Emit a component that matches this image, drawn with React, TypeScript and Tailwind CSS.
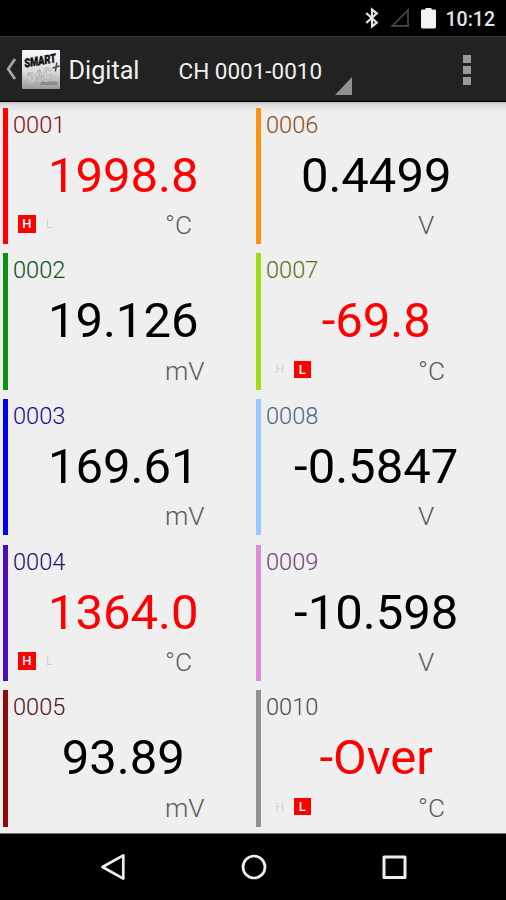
type Alarm = 'H' | 'L' | null;

interface Channel {
  id: string;
  value: string;
  unit: string;
  bar: string;
  label: string;
  alarm: Alarm;
}

const leftChannels: Channel[] = [
  { id: '0001', value: '1998.8', unit: '°C', bar: 'bg-[#ff0000]', label: 'text-[#7d1212]', alarm: 'H' },
  { id: '0002', value: '19.126', unit: 'mV', bar: 'bg-[#0a9014]', label: 'text-[#0d4f18]', alarm: null },
  { id: '0003', value: '169.61', unit: 'mV', bar: 'bg-[#0000f0]', label: 'text-[#12128a]', alarm: null },
  { id: '0004', value: '1364.0', unit: '°C', bar: 'bg-[#4b0cc0]', label: 'text-[#2b1068]', alarm: 'H' },
  { id: '0005', value: '93.89', unit: 'mV', bar: 'bg-[#900a0a]', label: 'text-[#4f1414]', alarm: null },
];

const rightChannels: Channel[] = [
  { id: '0006', value: '0.4499', unit: 'V', bar: 'bg-[#ff9010]', label: 'text-[#8a5018]', alarm: null },
  { id: '0007', value: '-69.8', unit: '°C', bar: 'bg-[#a0dc14]', label: 'text-[#56741a]', alarm: 'L' },
  { id: '0008', value: '-0.5847', unit: 'V', bar: 'bg-[#98c8fc]', label: 'text-[#4c6688]', alarm: null },
  { id: '0009', value: '-10.598', unit: 'V', bar: 'bg-[#dc8cdc]', label: 'text-[#704870]', alarm: null },
  { id: '0010', value: '-Over', unit: '°C', bar: 'bg-[#909090]', label: 'text-[#4c4c4c]', alarm: 'L' },
];

function AlarmFlag({ name, active }: { name: string; active: boolean }) {
  return (
    <span
      className={`flex h-[17.5px] w-[17.5px] items-center justify-center leading-none ${
        active ? 'bg-[#ff0000] text-[13px] font-medium text-white' : 'text-[12px] font-light text-[#c8c8c8]'
      }`}
    >
      {name}
    </span>
  );
}

function ChannelCell({ channel }: { channel: Channel }) {
  return (
    <div className="flex h-[136.4px] pl-[3px]">
      <div className={`w-[5px] shrink-0 ${channel.bar}`} />
      <div className="flex-1">
        <div className={`pl-[5px] text-[23.6px] leading-[35px] font-light ${channel.label}`}>{channel.id}</div>
        <div
          className={`-ml-2 w-[246.4px] text-center text-[49px] leading-[65.4px] whitespace-nowrap ${
            channel.alarm ? 'text-[#ff0000]' : 'text-black'
          }`}
        >
          {channel.value}
        </div>
        <div className="flex h-9">
          <div className="flex w-[157px] gap-[5px] pt-[7px] pl-[10px]">
            {channel.alarm && (
              <>
                <AlarmFlag name="H" active={channel.alarm === 'H'} />
                <AlarmFlag name="L" active={channel.alarm === 'L'} />
              </>
            )}
          </div>
          <div className="text-[26.3px] leading-[35px] font-light text-[#5c5c5c]">{channel.unit}</div>
        </div>
      </div>
    </div>
  );
}

function StatusBar() {
  return (
    <div className="flex h-9 items-center justify-end bg-black pr-[11px] text-[#e4e4e4]">
      <svg width="14" height="22" viewBox="0 0 14 22" fill="none" stroke="#e4e4e4" strokeWidth="2.2">
        <path d="M1.2 6 L11.8 15.6 L7 19.4 V2.6 L11.8 6.4 L1.2 16" />
      </svg>
      <svg className="ml-[11px]" width="20" height="20" viewBox="0 0 20 20" fill="none" stroke="#444" strokeWidth="1.8">
        <path d="M2.2 18 H18 V2.2 Z" />
      </svg>
      <svg className="ml-[11px]" width="15" height="22" viewBox="0 0 15 22" fill="#f2f2f2">
        <path d="M4.5 1 H10.5 V2.6 H13.6 Q15 2.6 15 4 V20 Q15 21.4 13.6 21.4 H1.4 Q0 21.4 0 20 V4 Q0 2.6 1.4 2.6 H4.5 Z" />
      </svg>
      <span className="ml-[10px] pt-[3px] text-[19.5px] leading-[33px] font-medium">10:12</span>
    </div>
  );
}

function AppIcon() {
  return (
    <svg width="38" height="39" viewBox="0 0 38 39">
      <defs>
        <linearGradient id="tile" x1="0" y1="0" x2="0" y2="1">
          <stop offset="0" stopColor="#fafafa" />
          <stop offset="0.55" stopColor="#dcdcdc" />
          <stop offset="1" stopColor="#9a9a9a" />
        </linearGradient>
      </defs>
      <rect width="38" height="39" rx="1" fill="url(#tile)" />
      <g fontFamily="Roboto, sans-serif" fontStyle="italic" fontWeight="900">
        <text x="3" y="17.6" fontSize="12" fill="#111" stroke="#111" strokeWidth="0.5" transform="rotate(-10 3 17.6)" textLength="32" lengthAdjust="spacingAndGlyphs">
          SMART
        </text>
        <text x="7" y="34" fontSize="15" fill="#dedede" stroke="#a8a8a8" strokeWidth="0.7" transform="rotate(-16 7 34)" textLength="25" lengthAdjust="spacingAndGlyphs">
          DAC
        </text>
        <text x="18.5" y="34.5" fontSize="6" fill="#777" textLength="17" lengthAdjust="spacingAndGlyphs">
          mobile
        </text>
      </g>
      <path d="M30.5 18 L37.5 16 M34.8 12.5 L33.4 21.5" stroke="#444" strokeWidth="1.5" />
    </svg>
  );
}

function ActionBar() {
  return (
    <div className="flex h-[66px] items-center border-t border-b border-t-[#333] border-b-black bg-[#222] text-[#f0f0f0]">
      <svg className="ml-[6px]" width="11" height="24" viewBox="0 0 11 24" fill="none" stroke="#a4a4a4" strokeWidth="2.8">
        <path d="M9 2 L2.2 12 L9 22" />
      </svg>
      <div className="ml-[4.5px]">
        <AppIcon />
      </div>
      <span className="ml-[9px] w-[110px] pt-[3px] text-[25.2px] leading-8">Digital</span>
      <span className="pt-[3px] text-[22.5px] leading-8 whitespace-nowrap">CH 0001-0010</span>
      <svg className="mt-[34px] ml-[13px]" width="18" height="18" viewBox="0 0 18 18" fill="#919191">
        <path d="M0 18 H17 V0 Z" />
      </svg>
      <div className="mr-[35px] ml-auto flex flex-col gap-[3px] pt-[1px]">
        <span className="size-[8px] bg-[#999]" />
        <span className="size-[8px] bg-[#999]" />
        <span className="size-[8px] bg-[#999]" />
      </div>
    </div>
  );
}

function NavBar() {
  return (
    <div className="flex h-[66.5px] items-center bg-black pl-[100px]">
      <svg width="26" height="28" viewBox="0 0 26 28" fill="none" stroke="#eee" strokeWidth="2.7" strokeLinejoin="round">
        <path d="M2.5 14 L23.3 2.4 V25.6 Z" />
      </svg>
      <svg className="ml-[113.5px]" width="28" height="28" viewBox="0 0 28 28" fill="none" stroke="#eee" strokeWidth="2.7">
        <circle cx="14" cy="14" r="11" />
      </svg>
      <svg className="ml-[112px]" width="28" height="28" viewBox="0 0 28 28" fill="none" stroke="#eee" strokeWidth="3" strokeLinejoin="round">
        <rect x="4" y="4" width="21" height="20.5" />
      </svg>
    </div>
  );
}

export default function App() {
  return (
    <div className="flex h-[900px] w-[506px] flex-col overflow-hidden bg-black font-[Roboto,sans-serif]">
      <StatusBar />
      <ActionBar />
      <div className="flex flex-1 border-b border-[#777] bg-[#efefef] bg-[linear-gradient(to_bottom,#bcbcbc_0px,#dedede_3px,#efefef_10px)] pt-[5.6px]">
        <div className="flex w-[253px] flex-col gap-[9.3px]">
          {leftChannels.map((channel) => (
            <ChannelCell key={channel.id} channel={channel} />
          ))}
        </div>
        <div className="flex w-[253px] flex-col gap-[9.3px]">
          {rightChannels.map((channel) => (
            <ChannelCell key={channel.id} channel={channel} />
          ))}
        </div>
      </div>
      <NavBar />
    </div>
  );
}
